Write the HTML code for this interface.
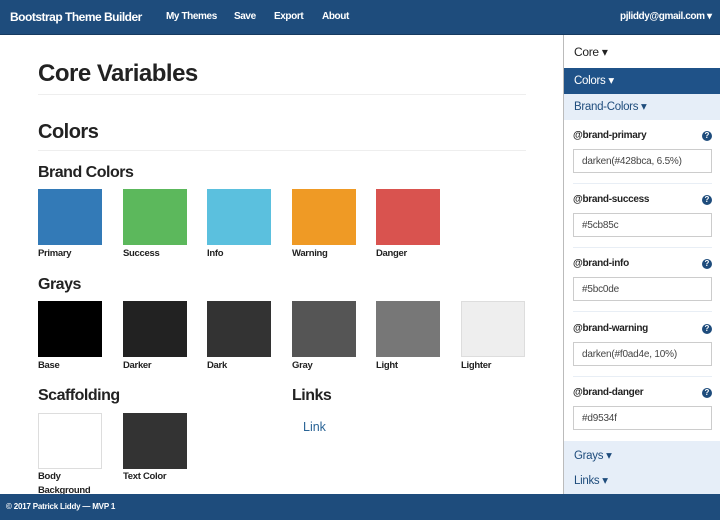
<!DOCTYPE html><html><head><style>
body{margin:0;width:720px;height:520px;position:relative;overflow:hidden;font-family:"Liberation Sans",sans-serif;color:#222;background:#fff}
.a{position:absolute;white-space:nowrap}
.nav{left:0;top:0;width:720px;height:34px;background:#1e4c7c;border-bottom:1px solid #163a60}
.nav span{position:absolute;top:11px;color:#fff;font-size:10px;font-weight:bold;letter-spacing:-.4px}
.sw{position:absolute;width:64px;height:56px}
.lb{position:absolute;font-size:9.5px;font-weight:bold;letter-spacing:-.3px}
.h{position:absolute;font-weight:bold;letter-spacing:-.5px}
.hr{position:absolute;left:38px;width:488px;height:1px;background:#eee}
.side{left:563px;top:35px;width:157px;height:459px;border-left:1px solid #bbb;background:#fff}
.row{position:absolute;left:0;width:157px;font-size:11.5px;letter-spacing:-.3px}
.fl{position:absolute;left:9px;font-size:10px;font-weight:bold;letter-spacing:-.3px}
.q{position:absolute;left:138px;width:10px;height:10px;border-radius:50%;background:#1e4c7c;color:#fff;font-size:8px;font-weight:bold;text-align:center;line-height:10px}
.in{position:absolute;left:9px;height:24px;border:1px solid #ccc;font-size:10px;line-height:24px;padding-left:8px;box-sizing:border-box;width:139px;color:#444;letter-spacing:-.2px}
.sep{position:absolute;left:9px;width:139px;height:1px;background:#e8eef5}
</style></head><body>
<div class="a nav"><span style="left:10px;top:10px;font-size:12px;letter-spacing:-.5px">Bootstrap Theme Builder</span><span style="left:166px">My Themes</span><span style="left:234px">Save</span><span style="left:274px">Export</span><span style="left:322px">About</span><span style="left:620px">pjliddy@gmail.com ▾</span></div>
<div class="h" style="left:38px;top:60px;font-size:24px">Core Variables</div><div class="hr" style="top:94px"></div>
<div class="h" style="left:38px;top:121px;font-size:20px">Colors</div><div class="hr" style="top:150px"></div>
<div class="h" style="left:38px;top:164px;font-size:16px">Brand Colors</div>
<div class="sw" style="left:38px;top:189px;background:#337ab7"></div><div class="lb" style="left:38px;top:248px">Primary</div>
<div class="sw" style="left:123px;top:189px;background:#5cb85c"></div><div class="lb" style="left:123px;top:248px">Success</div>
<div class="sw" style="left:207px;top:189px;background:#5bc0de"></div><div class="lb" style="left:207px;top:248px">Info</div>
<div class="sw" style="left:292px;top:189px;background:#ef9a25"></div><div class="lb" style="left:292px;top:248px">Warning</div>
<div class="sw" style="left:376px;top:189px;background:#d9534f"></div><div class="lb" style="left:376px;top:248px">Danger</div>
<div class="h" style="left:38px;top:276px;font-size:16px">Grays</div>
<div class="sw" style="left:38px;top:301px;background:#000"></div><div class="lb" style="left:38px;top:360px">Base</div>
<div class="sw" style="left:123px;top:301px;background:#222"></div><div class="lb" style="left:123px;top:360px">Darker</div>
<div class="sw" style="left:207px;top:301px;background:#333"></div><div class="lb" style="left:207px;top:360px">Dark</div>
<div class="sw" style="left:292px;top:301px;background:#555"></div><div class="lb" style="left:292px;top:360px">Gray</div>
<div class="sw" style="left:376px;top:301px;background:#777"></div><div class="lb" style="left:376px;top:360px">Light</div>
<div class="sw" style="left:461px;top:301px;background:#eee;box-sizing:border-box;border:1px solid #ddd"></div><div class="lb" style="left:461px;top:360px">Lighter</div>
<div class="h" style="left:38px;top:387px;font-size:16px">Scaffolding</div>
<div class="sw" style="left:38px;top:413px;background:#fff;box-sizing:border-box;border:1px solid #ddd"></div><div class="lb" style="left:38px;top:470px;line-height:14px;white-space:normal;width:60px">Body Background</div>
<div class="sw" style="left:123px;top:413px;background:#333"></div><div class="lb" style="left:123px;top:471px">Text Color</div>
<div class="h" style="left:292px;top:387px;font-size:16px">Links</div>
<div class="a" style="left:303px;top:420px;font-size:12.5px;color:#2a6496">Link</div>
<div class="a side">
<div class="row" style="top:0;height:34px;line-height:34px;padding-left:10px;box-sizing:border-box;color:#222;font-size:12px">Core ▾</div>
<div class="row" style="top:33px;height:26px;line-height:26px;padding-left:10px;box-sizing:border-box;background:#1f5288;color:#fff">Colors ▾</div>
<div class="row" style="top:59px;height:26px;line-height:26px;padding-left:10px;box-sizing:border-box;background:#e6eef8;color:#1e4c7c">Brand-Colors ▾</div>
<div class="fl" style="top:95px">@brand-primary</div><div class="q" style="top:96px">?</div><div class="in" style="top:114px">darken(#428bca, 6.5%)</div><div class="sep" style="top:148px"></div>
<div class="fl" style="top:159px">@brand-success</div><div class="q" style="top:160px">?</div><div class="in" style="top:178px">#5cb85c</div><div class="sep" style="top:212px"></div>
<div class="fl" style="top:223px">@brand-info</div><div class="q" style="top:224px">?</div><div class="in" style="top:242px">#5bc0de</div><div class="sep" style="top:276px"></div>
<div class="fl" style="top:288px">@brand-warning</div><div class="q" style="top:289px">?</div><div class="in" style="top:307px">darken(#f0ad4e, 10%)</div><div class="sep" style="top:341px"></div>
<div class="fl" style="top:352px">@brand-danger</div><div class="q" style="top:353px">?</div><div class="in" style="top:371px">#d9534f</div>
<div class="row" style="top:406px;height:53px;background:#e6eef8;color:#1e4c7c"><div style="position:absolute;left:10px;top:7px">Grays ▾</div><div style="position:absolute;left:10px;top:32px">Links ▾</div></div>
</div>
<div class="a" style="left:0;top:494px;width:720px;height:26px;background:#1e4c7c;color:#fff;font-size:8px;font-weight:bold;line-height:26px;padding-left:6px;box-sizing:border-box;letter-spacing:-.2px">© 2017 Patrick Liddy — MVP 1</div>
</body></html>
